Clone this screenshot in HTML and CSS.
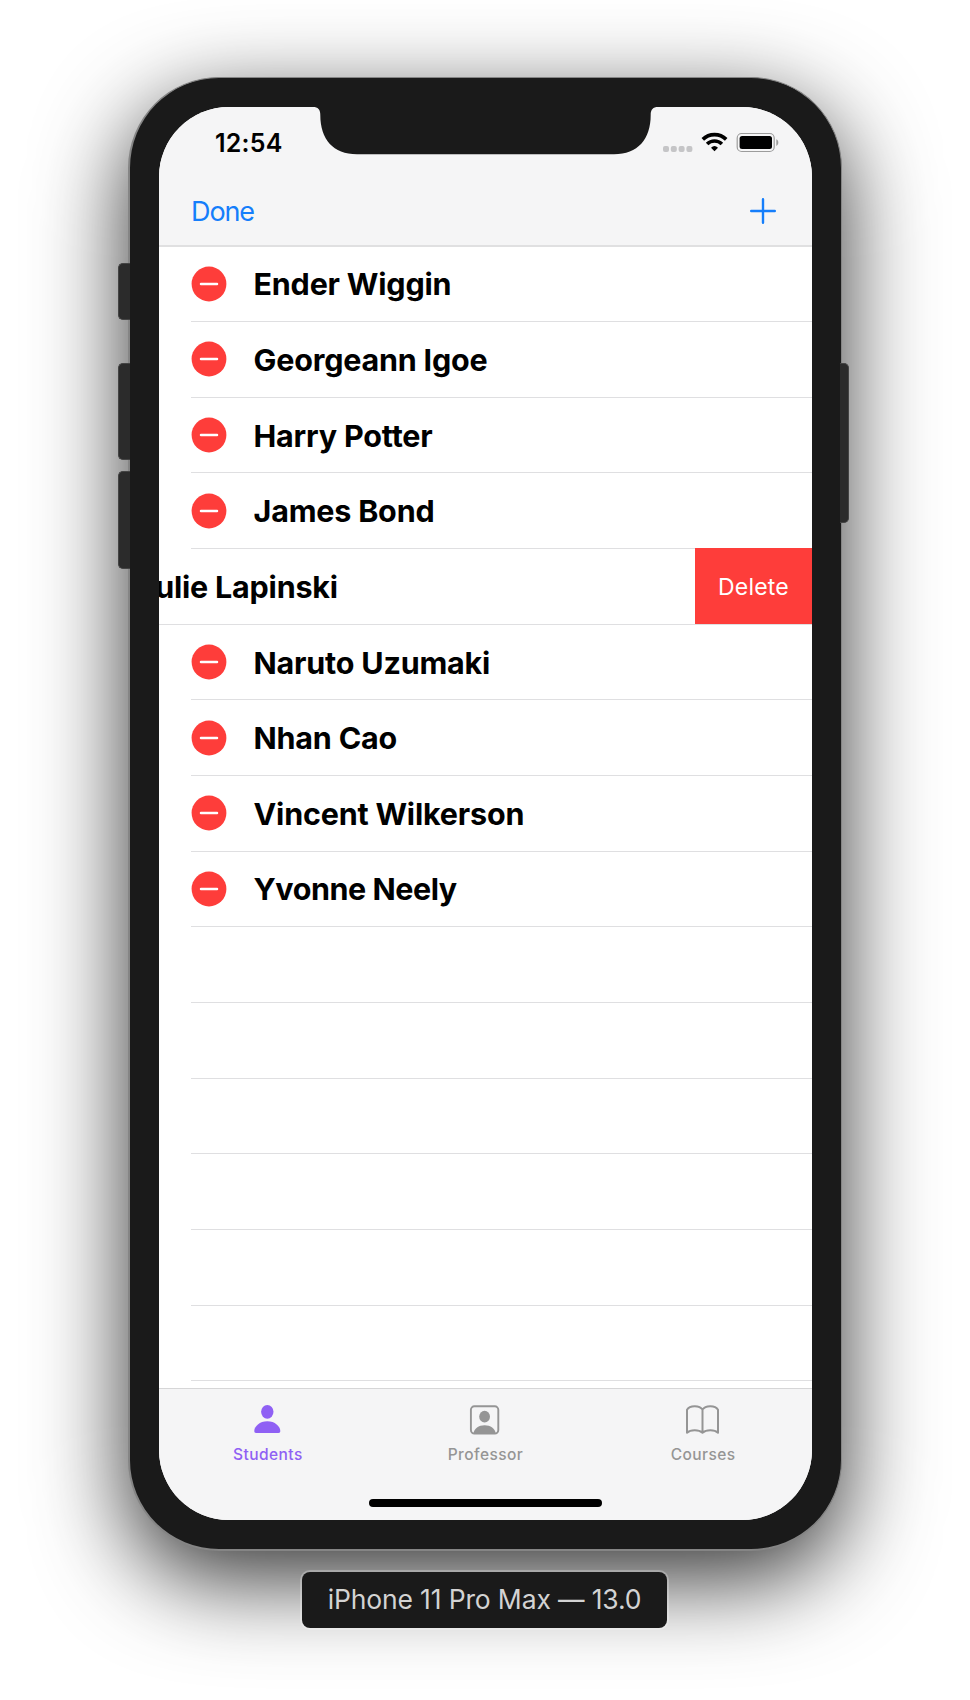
FILE: index.html
```
<!DOCTYPE html>
<html lang="en">
<head>
<meta charset="utf-8">
<title>Students</title>
<link rel="stylesheet" href="styles.css">
</head>
<body>
<svg width="0" height="0" class="defs"><symbol id="minus" viewBox="0 0 36 36"><circle cx="18" cy="18" r="17.400" fill="#fe3d3a"/><path d="M10 18h16" stroke="#fff" stroke-width="2.500" stroke-linecap="round"/></symbol></svg>
<div class="device">
  <span class="key key-mute"></span>
  <span class="key key-up"></span>
  <span class="key key-down"></span>
  <span class="key key-power"></span>
  <main class="screen">
    <header class="top">
      <div class="status">
        <span class="time">12:54</span>
        <svg class="status-icons" width="118" height="24" viewBox="0 0 118 24">
          <g fill="#c5c5c7"><rect x="1" y="15" width="6" height="6" rx="2"/><rect x="8.8" y="15" width="6" height="6" rx="2"/><rect x="16.600" y="15" width="6" height="6" rx="2"/><rect x="24.400" y="15" width="6" height="6" rx="2"/></g>
          <g fill="none" stroke="#000" stroke-width="3.600">
            <path d="M40.800 8.400a16.600 16.600 0 0 1 23.400 0"/>
            <path d="M45.100 13a10.600 10.600 0 0 1 14.800 0"/>
          </g>
          <path d="M52.500 20.300l-3.500-3.600a5.200 5.200 0 0 1 7 0z" fill="#000"/>
          <rect x="75.200" y="2.500" width="37" height="18" rx="4.500" fill="none" stroke="#9c9c9c" stroke-width="1.200"/>
          <rect x="77.600" y="4.900" width="32.400" height="13.200" rx="2.500" fill="#000"/>
          <path d="M114.300 8.300c2.700 1 2.700 5.600 0 6.600z" fill="#9c9c9c"/>
        </svg>
      </div>
      <nav class="navbar">
        <span class="done">Done</span>
        <svg width="26" height="26" viewBox="0 0 26 26" stroke="#157efb" stroke-width="2.400" stroke-linecap="round"><path d="M13 1.200v23.600M1.200 13h23.600"/></svg>
      </nav>
    </header>
    <ul class="list">
      <li class="row"><svg class="minus"><use href="#minus"/></svg><span class="name">Ender Wiggin</span></li>
      <li class="row"><svg class="minus"><use href="#minus"/></svg><span class="name">Georgeann Igoe</span></li>
      <li class="row"><svg class="minus"><use href="#minus"/></svg><span class="name">Harry Potter</span></li>
      <li class="row"><svg class="minus"><use href="#minus"/></svg><span class="name">James Bond</span></li>
      <li class="row swiped"><span class="name">Julie Lapinski</span><span class="delete">Delete</span></li>
      <li class="row"><svg class="minus"><use href="#minus"/></svg><span class="name">Naruto Uzumaki</span></li>
      <li class="row"><svg class="minus"><use href="#minus"/></svg><span class="name">Nhan Cao</span></li>
      <li class="row"><svg class="minus"><use href="#minus"/></svg><span class="name">Vincent Wilkerson</span></li>
      <li class="row"><svg class="minus"><use href="#minus"/></svg><span class="name tight">Yvonne Neely</span></li>
      <li class="row"></li>
      <li class="row"></li>
      <li class="row"></li>
      <li class="row"></li>
      <li class="row"></li>
      <li class="row"></li>
    </ul>
    <footer class="tabs">
      <div class="tab active">
        <svg width="34" height="32" viewBox="0 0 34 32" fill="currentColor"><ellipse cx="16.300" cy="8.800" rx="6.200" ry="6.900"/><path d="M5.100 30C3.800 30 3.300 29.200 3.300 28c0-4.700 5.400-9.800 13-9.800S29.300 23.300 29.300 28c0 1.200-.5 2-1.800 2z"/></svg>
        <span>Students</span>
      </div>
      <div class="tab">
        <svg width="34" height="32" viewBox="0 0 34 32" fill="currentColor"><rect x="2.900" y="3.300" width="27.400" height="27.200" rx="3.500" fill="none" stroke="currentColor" stroke-width="1.900"/><ellipse cx="16.600" cy="13.700" rx="5.400" ry="5.900"/><path d="M5.600 30c.5-4.300 5-7.800 11-7.800S27.100 25.700 27.600 30z"/></svg>
        <span>Professor</span>
      </div>
      <div class="tab">
        <svg width="34" height="32" viewBox="0 0 34 32" fill="none" stroke="currentColor" stroke-width="2" stroke-linejoin="round"><path d="M16.500 6.500C13.500 2 3.700 2 1 6.800V29.800C4.500 26.600 12.500 26.300 16.500 29.800C20.500 26.300 28.500 26.600 32 29.800V6.800C29.300 2 19.500 2 16.500 6.500V29.800"/></svg>
        <span>Courses</span>
      </div>
    </footer>
    <svg class="notch" width="345" height="48" viewBox="0 0 345 48"><path d="M0 0C5 0 7.300 2.500 7.300 8C7.300 32 20 47.300 44 47.300H301C325 47.300 337.700 32 337.700 8C337.700 2.500 340 0 345 0z" fill="#1a1a1a"/></svg>
    <span class="home"></span>
  </main>
</div>
<div class="caption">iPhone 11 Pro Max — 13.0</div>
</body>
</html>
```
FILE: styles.css
```
* { box-sizing: border-box; }
body {
  margin: 0;
  height: 1700px;
  padding: 77px 0 0 128px;
  background: #fff;
  font-family: Inter, "Liberation Sans", sans-serif;
  overflow: hidden;
}
.defs { display: block; }
.device {
  position: relative;
  width: 714px;
  height: 1474px;
  padding: 29px;
  background: #1a1a1a;
  border: 2px solid #858585;
  border-top-width: 1px;
  border-right-width: 1px;
  border-radius: 91px;
  box-shadow: 0 28px 92px rgba(0, 0, 0, .8);
}
.key {
  position: absolute;
  left: -12px;
  width: 12px;
  background: #2b2b2b;
  border: 1px solid #444;
  border-right: 0;
  border-radius: 5px 0 0 5px;
}
.key-mute { top: 185px; height: 57px; }
.key-up { top: 285px; height: 97px; }
.key-down { top: 393px; height: 98px; }
.key-power {
  top: 285px;
  left: auto;
  right: -8px;
  width: 9px;
  height: 160px;
  border: 1px solid #444;
  border-left: 0;
  border-radius: 0 5px 5px 0;
}
.screen {
  position: relative;
  display: flex;
  flex-direction: column;
  width: 653px;
  height: 1413px;
  background: #fff;
  border-radius: 70px;
  overflow: hidden;
}
.top {
  flex: none;
  height: 140px;
  background: #f5f5f6;
  border-bottom: 2px solid #e0e0e1;
}
.status {
  display: flex;
  justify-content: space-between;
  align-items: center;
  height: 69px;
  padding: 2px 32px 0 56px;
}
.time { font-size: 25px; font-weight: 600; letter-spacing: .2px; }
.navbar {
  display: flex;
  justify-content: space-between;
  align-items: center;
  height: 69px;
  padding: 1px 36px 0 32px;
}
.done { font-size: 27px; letter-spacing: -1.100px; color: #157efb; }
.list {
  flex: 1;
  min-height: 0;
  margin: -.600px 0 0;
  padding: 0 0 0 32px;
  list-style: none;
  overflow: hidden;
}
.row {
  display: flex;
  align-items: center;
  height: 75.67px;
  border-bottom: 1px solid #dfdfe1;
}
.minus {
  flex: none;
  width: 36px;
  height: 36px;
  margin-right: 26.500px;
}
.name {
  font-size: 30.500px;
  font-weight: 700;
  letter-spacing: -.2px;
  white-space: nowrap;
}
.tight { letter-spacing: -.45px; }
.swiped {
  justify-content: space-between;
  margin-left: -32px;
  padding-left: 0;
}
.swiped .name { margin-left: -21.500px; }
.delete {
  display: grid;
  place-items: center;
  width: 117px;
  height: 76px;
  padding-top: 1px;
  background: #fe3d3a;
  color: #fff;
  font-size: 23px;
  letter-spacing: .2px;
}
.tabs {
  flex: none;
  display: grid;
  grid-template-columns: repeat(3, 1fr);
  height: 132px;
  padding-top: 14px;
  background: #f5f5f6;
  border-top: 1px solid #d6d6d7;
}
.tab {
  display: flex;
  flex-direction: column;
  align-items: center;
  gap: 10px;
  color: #959595;
  font-size: 15.500px;
  font-weight: 500;
  letter-spacing: .45px;
  line-height: 20px;
}
.active { color: #8f60f4; }
.notch { position: absolute; top: -0.500px; left: 154px; }
.home {
  position: absolute;
  left: 210px;
  bottom: 13px;
  width: 233px;
  height: 8px;
  border-radius: 4px;
  background: #000;
}
.caption {
  position: relative;
  display: grid;
  place-items: center;
  width: 365px;
  height: 56px;
  margin: 21px 0 0 174px;
  padding-bottom: 2px;
  border-radius: 8px;
  background: #1a1a1a;
  box-shadow: 0 0 0 2px rgba(255, 255, 255, .25);
  color: #d3d3d3;
  font-size: 26.500px;
  letter-spacing: -.15px;
}
```
